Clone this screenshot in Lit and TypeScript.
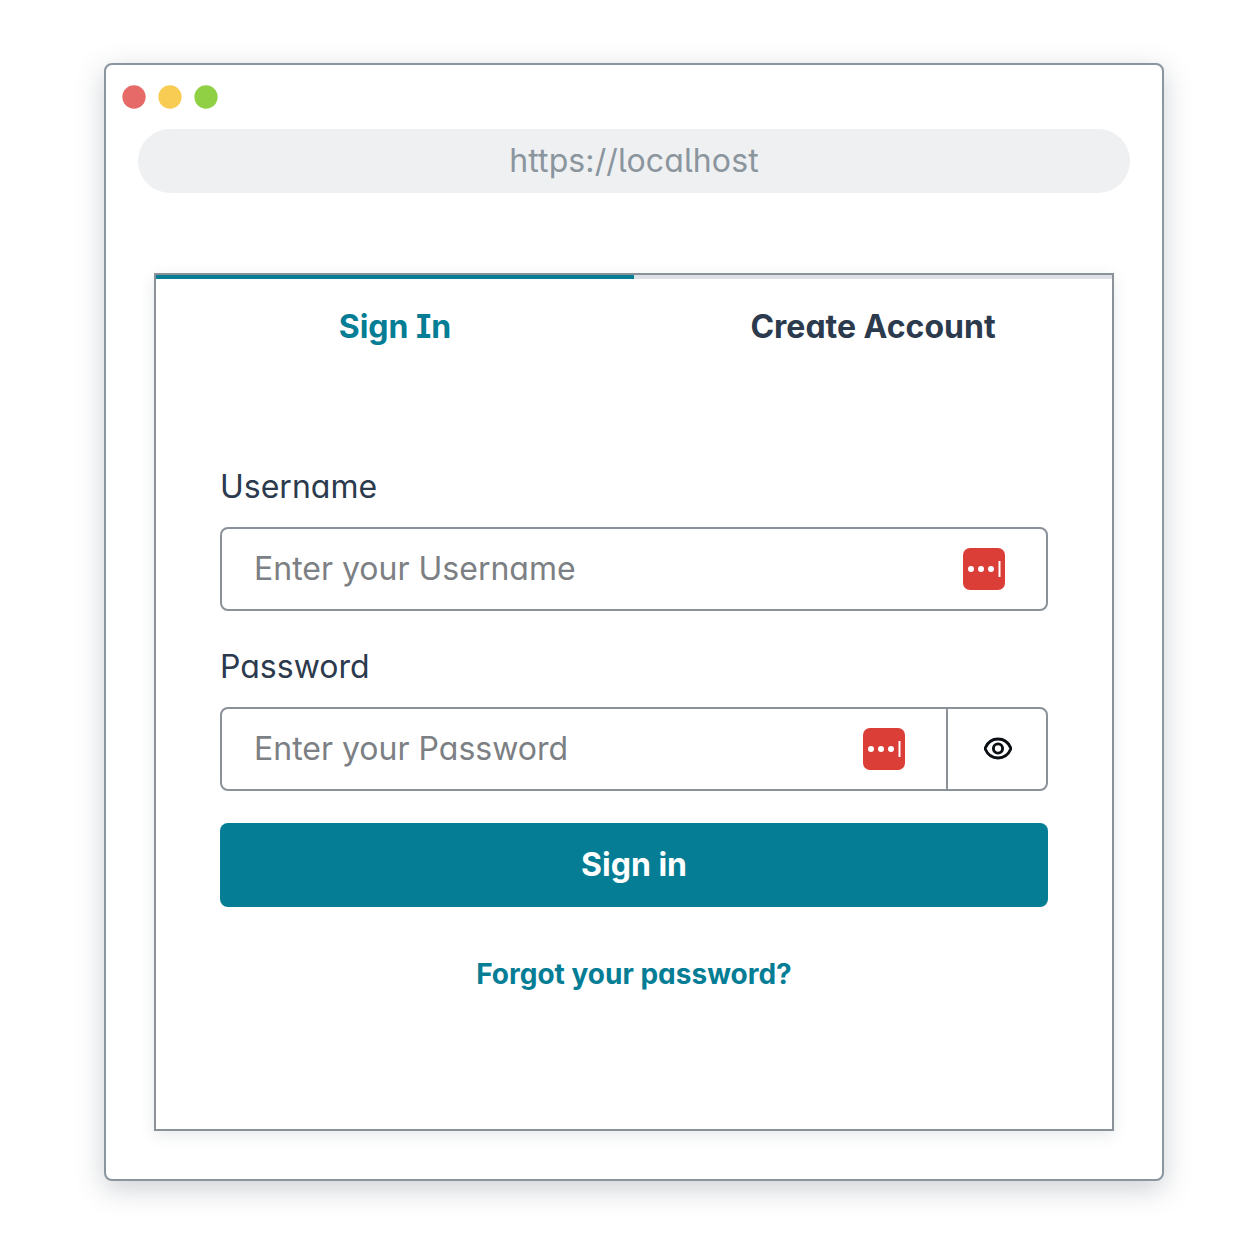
import { LitElement, html, css, svg } from 'lit'
import { customElement, state } from 'lit/decorators.js'

const managerIcon = html`
  <svg class="manager" width="42" height="42" viewBox="0 0 42 42">
    <rect width="42" height="42" rx="7" fill="#db3d37" />
    <circle cx="8" cy="21" r="3" fill="#fff" />
    <circle cx="18" cy="21" r="3" fill="#fff" />
    <circle cx="28" cy="21" r="3" fill="#fff" />
    <rect x="35.5" y="13" width="2" height="16" fill="#fff" />
  </svg>
`

const eyePath = svg`<path d="M14 3C8 3 3.2 7 1 12.5 3.2 18 8 22 14 22s10.8-4 13-9.500C24.800 7 20 3 14 3Z" />`

@customElement('app-root')
export class AppRoot extends LitElement {
  static styles = css`
    :host {
      display: block;
      padding: 63px 74px 65px 104px;
      background: #fff;
      font-family: Inter, 'Liberation Sans', sans-serif;
      font-feature-settings: 'cv05', 'cv08', 'cv11';
    }
    * {
      box-sizing: border-box;
    }
    .window {
      width: 1060px;
      padding: 20px 48px 48px;
      border: 2px solid #8a959e;
      border-radius: 8px;
      background: #fff;
      box-shadow: 0 8px 28px rgba(60, 75, 90, 0.26);
    }
    .dots {
      display: flex;
      gap: 12px;
      margin-left: -32px;
    }
    .dot {
      width: 24px;
      height: 24px;
      border-radius: 50%;
      transform: scale(0.97);
    }
    .address {
      margin: 20px -16px 80px;
      height: 64px;
      border-radius: 32px;
      background: #eff0f1;
      color: #8a959e;
      font-size: 32px;
      line-height: 64px;
      letter-spacing: 0.12px;
      text-align: center;
    }
    .card {
      border: 2px solid #8a9199;
      background: #fff;
      box-shadow: 0 4px 14px rgba(60, 75, 90, 0.12);
    }
    .tabs {
      display: flex;
    }
    .tab {
      flex: 1;
      padding: 24px 0 112px;
      border: none;
      border-top: 4px solid #dcdfe6;
      background: none;
      color: #2b3a4d;
      font: 750 32px/48px Inter, 'Liberation Sans', sans-serif;
      font-feature-settings: 'cv05', 'cv08', 'cv11';
      text-align: center;
      cursor: pointer;
    }
    .tab.active {
      border-top-color: #047d95;
      color: #047d95;
    }
    form {
      display: flex;
      flex-direction: column;
      padding: 0 64px 130px;
    }
    label {
      margin-bottom: 16px;
      color: #2b3a4d;
      font-size: 32px;
      line-height: 48px;
    }
    .row {
      display: flex;
      height: 84px;
      margin-bottom: 32px;
      border: 2px solid #8a9199;
      border-radius: 8px;
      overflow: hidden;
    }
    .field {
      flex: 1;
      display: flex;
      align-items: center;
      min-width: 0;
      padding-right: 41px;
    }
    input {
      flex: 1;
      min-width: 0;
      height: 100%;
      padding: 0 32px 2px;
      border: none;
      outline: none;
      background: none;
      color: #2b3a4d;
      font: 400 32px Inter, 'Liberation Sans', sans-serif;
      font-feature-settings: 'cv05', 'cv08', 'cv11';
    }
    input::placeholder {
      color: #7c7f83;
      opacity: 1;
    }
    .manager {
      flex: none;
      display: block;
    }
    .eye {
      flex: none;
      display: flex;
      align-items: center;
      justify-content: center;
      width: 100px;
      padding: 0 0 2px 2px;
      border: none;
      border-left: 2px solid #8a9199;
      background: none;
      cursor: pointer;
    }
    .eye svg {
      display: block;
      fill: none;
      stroke: #0a0f14;
      stroke-width: 2.9;
    }
    .submit {
      height: 84px;
      padding: 0 0 2px;
      border: none;
      border-radius: 8px;
      background: #047d95;
      color: #fff;
      font: 750 32px Inter, 'Liberation Sans', sans-serif;
      font-feature-settings: 'cv05', 'cv08', 'cv11';
      cursor: pointer;
    }
    .forgot {
      margin-top: 43px;
      margin-bottom: 1px;
      color: #047d95;
      font-size: 28px;
      font-weight: 750;
      line-height: 48px;
      text-align: center;
      text-decoration: none;
    }
  `

  @state()
  private tab = 'signin'

  @state()
  private showPassword = false

  private handleSubmit(e: Event) {
    e.preventDefault()
  }

  render() {
    return html`
      <div class="window">
        <div class="dots">
          <span class="dot" style="background:#e56a68"></span>
          <span class="dot" style="background:#f8cc52"></span>
          <span class="dot" style="background:#90d045"></span>
        </div>
        <div class="address">https://localhost</div>
        <div class="card">
          <div class="tabs">
            <button class="tab ${this.tab === 'signin' ? 'active' : ''}" @click=${() => (this.tab = 'signin')}>
              Sign In
            </button>
            <button class="tab ${this.tab === 'create' ? 'active' : ''}" @click=${() => (this.tab = 'create')}>
              Create Account
            </button>
          </div>
          <form @submit=${this.handleSubmit}>
            <label for="username">Username</label>
            <div class="row">
              <div class="field">
                <input id="username" placeholder="Enter your Username" />
                ${managerIcon}
              </div>
            </div>
            <label for="password">Password</label>
            <div class="row">
              <div class="field">
                <input
                  id="password"
                  type=${this.showPassword ? 'text' : 'password'}
                  placeholder="Enter your Password"
                />
                ${managerIcon}
              </div>
              <button
                class="eye"
                type="button"
                aria-label="Show password"
                @click=${() => (this.showPassword = !this.showPassword)}
              >
                <svg width="28" height="25" viewBox="0 0 28 25">
                  ${eyePath}
                  <circle cx="14" cy="12.500" r="4.600" />
                </svg>
              </button>
            </div>
            <button class="submit" type="submit">Sign in</button>
            <a class="forgot" href="#">Forgot your password?</a>
          </form>
        </div>
      </div>
    `
  }
}

declare global {
  interface HTMLElementTagNameMap {
    'app-root': AppRoot
  }
}
